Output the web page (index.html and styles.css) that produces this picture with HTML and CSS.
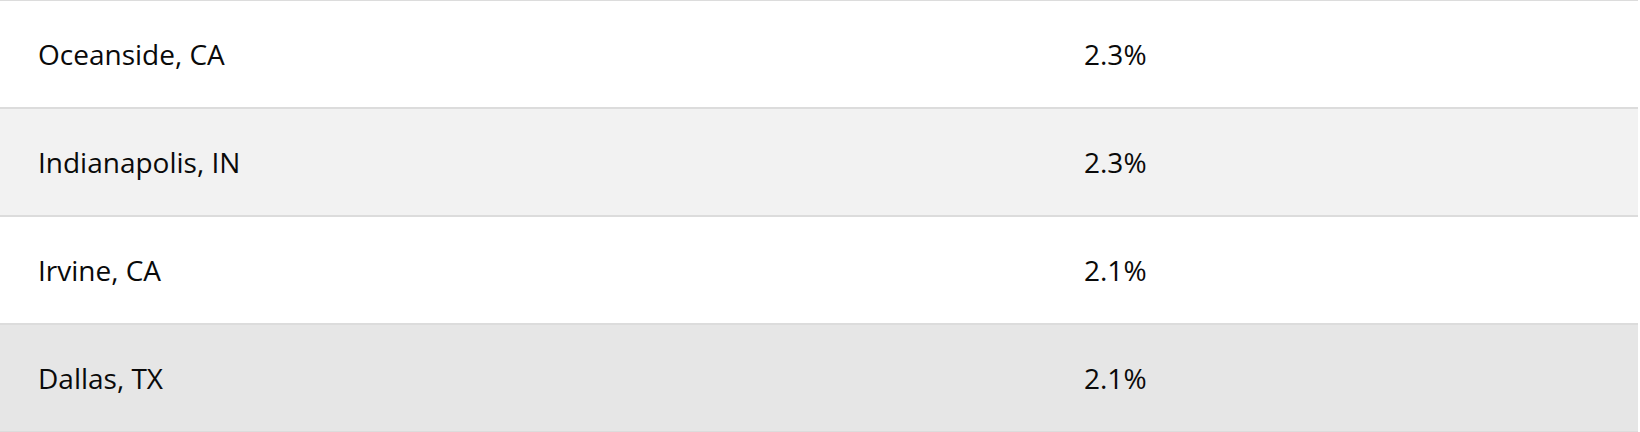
FILE: index.html
```html
<!DOCTYPE html>
<html>
<head>
<meta charset="utf-8">
<link rel="stylesheet" href="styles.css">
</head>
<body>
<div class="table">
  <div class="row">
    <div class="cell city">Oceanside, CA</div>
    <div class="cell pct">2.3%</div>
  </div>
  <div class="row alt">
    <div class="cell city">Indianapolis, IN</div>
    <div class="cell pct">2.3%</div>
  </div>
  <div class="row">
    <div class="cell city">Irvine, CA</div>
    <div class="cell pct">2.1%</div>
  </div>
  <div class="row hover">
    <div class="cell city">Dallas, TX</div>
    <div class="cell pct">2.1%</div>
  </div>
</div>
</body>
</html>
```
FILE: styles.css
```css
html, body {
  margin: 0;
  padding: 0;
  background: #ffffff;
}
body {
  font-family: "Open Sans", "Noto Sans", sans-serif;
  color: #0a0a0a;
  overflow: hidden;
}
.table {
  width: 1638px;
  margin-top: -1px;
  border-bottom: 2px solid #dcdcdc;
}
.row {
  display: grid;
  grid-template-columns: 1046px 1fr;
  height: 106px;
  border-top: 2px solid #dcdcdc;
  background: #ffffff;
}
.row.alt {
  background: #f2f2f2;
}
.row.hover {
  background: #e6e6e6;
}
.cell {
  display: flex;
  align-items: center;
  font-size: 28px;
  line-height: 1;
}
.city {
  padding-left: 38px;
}
.pct {
  padding-left: 38px;
}
```
